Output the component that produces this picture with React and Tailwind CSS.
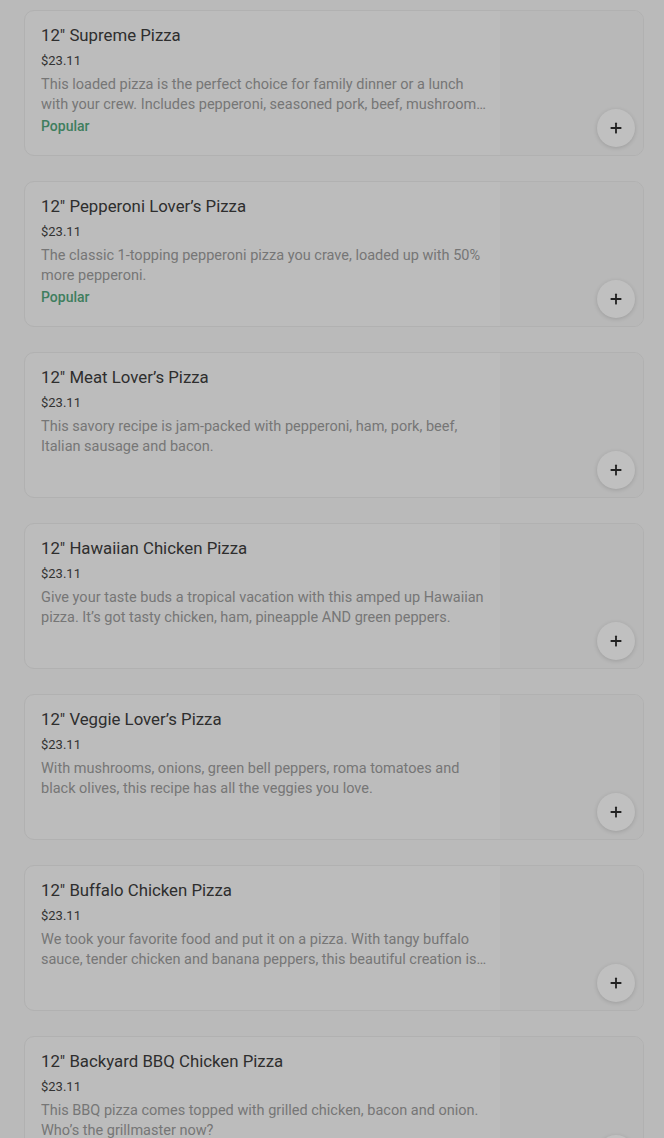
import { Plus } from 'lucide-react'

const items = [
  {
    name: '12" Supreme Pizza',
    desc: 'This loaded pizza is the perfect choice for family dinner or a lunch with your crew. Includes pepperoni, seasoned pork, beef, mushrooms, green peppers and onions.',
    popular: true,
  },
  {
    name: '12" Pepperoni Lover\u2019s Pizza',
    desc: 'The classic 1-topping pepperoni pizza you crave, loaded up with 50% more pepperoni.',
    popular: true,
  },
  {
    name: '12" Meat Lover\u2019s Pizza',
    desc: 'This savory recipe is jam-packed with pepperoni, ham, pork, beef, Italian sausage and bacon.',
  },
  {
    name: '12" Hawaiian Chicken Pizza',
    desc: 'Give your taste buds a tropical vacation with this amped up Hawaiian pizza. It\u2019s got tasty chicken, ham, pineapple AND green peppers.',
  },
  {
    name: '12" Veggie Lover\u2019s Pizza',
    desc: 'With mushrooms, onions, green bell peppers, roma tomatoes and black olives, this recipe has all the veggies you love.',
  },
  {
    name: '12" Buffalo Chicken Pizza',
    desc: 'We took your favorite food and put it on a pizza. With tangy buffalo sauce, tender chicken and banana peppers, this beautiful creation is sure to please.',
  },
  {
    name: '12" Backyard BBQ Chicken Pizza',
    desc: 'This BBQ pizza comes topped with grilled chicken, bacon and onion. Who\u2019s the grillmaster now?',
  },
]

function ItemCard({ item }) {
  return (
    <div className="flex h-[146px] shrink-0 overflow-hidden rounded-[10px] border border-[#b1b1b1] bg-[#bcbcbc]">
      <div className="flex min-w-0 flex-1 flex-col pl-4 pr-2 pt-[12px]">
        <div className="text-[16.8px] leading-[24px] text-[#2e2e2e]">{item.name}</div>
        <div className="mt-[4px] text-[13px] leading-[20px] text-[#333]">$23.11</div>
        <div className="mt-[4px] line-clamp-2 text-[14.5px] leading-[20px] text-[#767676]">{item.desc}</div>
        {item.popular && (
          <div className="text-[14px] font-medium leading-[22px] text-[#3f7e5e]">Popular</div>
        )}
      </div>
      <div className="relative w-[143px] shrink-0 bg-[#b8b8b8]">
        <button className="absolute bottom-[8px] right-[8px] flex h-[38px] w-[38px] items-center justify-center rounded-full bg-[#c0c0c0] shadow-[0_1px_4px_rgba(0,0,0,0.15)]">
          <Plus size={16} strokeWidth={2.75} className="text-[#222]" />
        </button>
      </div>
    </div>
  )
}

export default function App() {
  return (
    <div
      className="min-h-[1138px] bg-[#bababa] px-6 pt-[10px]"
      style={{ fontFamily: 'Roboto, "Noto Sans", sans-serif' }}
    >
      <div className="flex w-[620px] flex-col gap-[25px]">
        {items.map((item) => (
          <ItemCard key={item.name} item={item} />
        ))}
      </div>
    </div>
  )
}
